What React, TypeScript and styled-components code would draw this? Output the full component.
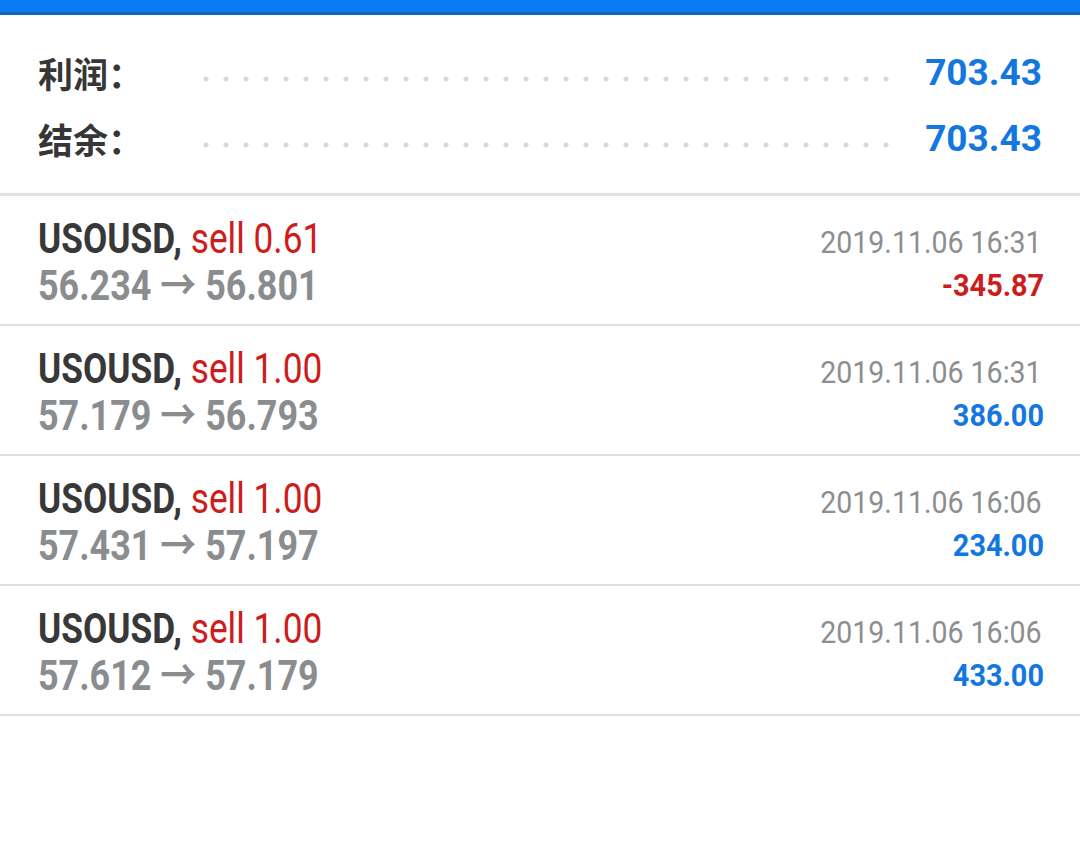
import * as React from 'react';
import styled, { createGlobalStyle } from 'styled-components';

// blue #1477e0, red #cc1c1c, grey #8a8d8f

const GlobalStyle = createGlobalStyle`
    html, body {
        margin: 0;
        padding: 0;
        background: #ffffff;
        font-family: Roboto, "Noto Sans CJK SC", sans-serif;
    }
`;

const Page = styled.div`
    width: 1080px;
    min-height: 866px;
    background: #ffffff;
`;

const TopBar = styled.div`
    height: 12px;
    background: #0a7bf0;
    border-bottom: 3px solid #0f63b8;
`;

const Summary = styled.div`
    padding: 24px 38px 22px 38px;
    border-bottom: 3px solid #e2e2e2;
`;

const SummaryRow = styled.div`
    display: flex;
    align-items: center;
    height: 66px;
`;

const Label = styled.div`
    width: 158px;
    font-family: "Noto Sans CJK SC", sans-serif;
    font-size: 35px;
    font-weight: 700;
    color: #363636;
`;

const Dots = styled.div`
    flex: 1;
    height: 6px;
    margin: 14px 36px 0 0;
    background-image: radial-gradient(circle, #d9d9d9 2.3px, transparent 2.8px);
    background-size: 20px 6px;
    background-repeat: repeat-x;
`;

const SummaryValue = styled.div`
    font-family: Roboto, sans-serif;
    font-size: 37px;
    font-weight: 700;
    color: #1477e0;
`;

const TradeRow = styled.div`
    display: flex;
    justify-content: space-between;
    align-items: center;
    height: 128px;
    padding: 0 38px;
    border-bottom: 2px solid #e0e0e0;
`;

const LeftCol = styled.div`
    display: flex;
    flex-direction: column;
    padding-top: 4px;
`;

const RightCol = styled.div`
    display: flex;
    flex-direction: column;
    align-items: flex-end;
    padding-top: 8px;
`;

// no condensed face installed, so squeeze Roboto horizontally
const Condensed = styled.span<{ $right?: boolean; $scale?: number }>`
    display: inline-block;
    white-space: nowrap;
    transform: scaleX(${p => p.$scale ?? 0.84});
    transform-origin: ${p => (p.$right ? 'right' : 'left')} center;
`;

const Title = styled.div`
    font-size: 42px;
    line-height: 47px;
    font-weight: 700;
    color: #383838;
`;

const Side = styled.span`
    font-weight: 400;
    color: #cc1c1c;
`;

const Prices = styled.div`
    font-size: 42px;
    line-height: 47px;
    font-weight: 700;
    color: #8a8d8f;
`;

const DateText = styled.div`
    font-size: 31px;
    line-height: 43px;
    font-weight: 400;
    color: #8c8e90;
`;

const Profit = styled.div<{ $loss?: boolean }>`
    margin-right: -2px;
    font-size: 31px;
    line-height: 43px;
    font-weight: 700;
    color: ${p => (p.$loss ? '#cc1c1c' : '#1477e0')};
`;

type Trade = {
    symbol: string;
    side: string;
    open: string;
    close: string;
    time: string;
    profit: string;
};

const trades: Trade[] = [
    { symbol: 'USOUSD', side: 'sell 0.61', open: '56.234', close: '56.801', time: '2019.11.06 16:31', profit: '-345.87' },
    { symbol: 'USOUSD', side: 'sell 1.00', open: '57.179', close: '56.793', time: '2019.11.06 16:31', profit: '386.00' },
    { symbol: 'USOUSD', side: 'sell 1.00', open: '57.431', close: '57.197', time: '2019.11.06 16:06', profit: '234.00' },
    { symbol: 'USOUSD', side: 'sell 1.00', open: '57.612', close: '57.179', time: '2019.11.06 16:06', profit: '433.00' },
];

const App = () => {
    return (
        <>
            <GlobalStyle />
            <Page>
                <TopBar />

                <Summary>
                    <SummaryRow>
                        <Label>利润：</Label>
                        <Dots />
                        <SummaryValue>703.43</SummaryValue>
                    </SummaryRow>
                    <SummaryRow>
                        <Label>结余：</Label>
                        <Dots />
                        <SummaryValue>703.43</SummaryValue>
                    </SummaryRow>
                </Summary>

                {trades.map((t, i) => (
                    <TradeRow key={i}>
                        <LeftCol>
                            <Title>
                                <Condensed>
                                    {t.symbol}, <Side>{t.side}</Side>
                                </Condensed>
                            </Title>
                            <Prices>
                                <Condensed $scale={0.855}>{t.open} → {t.close}</Condensed>
                            </Prices>
                        </LeftCol>
                        <RightCol>
                            <DateText>
                                <Condensed $right $scale={0.92}>{t.time}</Condensed>
                            </DateText>
                            <Profit $loss={t.profit.startsWith('-')}>
                                <Condensed $right $scale={0.93}>{t.profit}</Condensed>
                            </Profit>
                        </RightCol>
                    </TradeRow>
                ))}
            </Page>
        </>
    );
};

export default App;
